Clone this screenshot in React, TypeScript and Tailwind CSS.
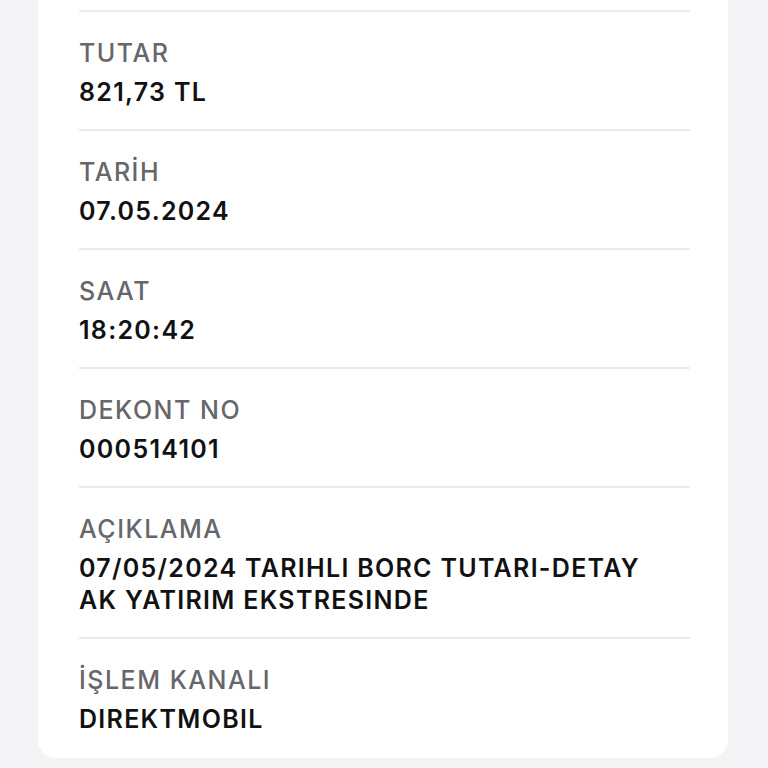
import React from 'react'

interface DetailRowProps {
  label: string
  value: React.ReactNode
}

const rows: DetailRowProps[] = [
  { label: 'TUTAR', value: '821,73 TL' },
  { label: 'TARİH', value: '07.05.2024' },
  { label: 'SAAT', value: '18:20:42' },
  { label: 'DEKONT NO', value: '000514101' },
  {
    label: 'AÇIKLAMA',
    value: (
      <>
        07/05/2024 TARIHLI BORC TUTARI-DETAY
        <br />
        AK YATIRIM EKSTRESINDE
      </>
    ),
  },
  { label: 'İŞLEM KANALI', value: 'DIREKTMOBIL' },
]

const DetailRow: React.FC<DetailRowProps> = ({ label, value }) => (
  <div className="border-t-2 border-[#ebebed] pt-[26px] pb-[21px]">
    <p className="text-[25px] leading-[30px] font-medium tracking-[1.5px] text-[#66666b]">{label}</p>
    <p className="mt-[8px] text-[25px] leading-[32px] font-semibold tracking-[1.3px] text-[#111113]">{value}</p>
  </div>
)

export default function App() {
  return (
    <div
      className="h-[768px] w-[768px] overflow-hidden bg-[#f4f4f6]"
      style={{ fontFamily: 'Inter, "Noto Sans", sans-serif' }}
    >
      <div className="ml-[38px] w-[690px] rounded-b-[18px] bg-white pb-[2px] pl-[41px] pr-[38px] pt-[10px]">
        {rows.map((row) => (
          <DetailRow key={row.label} {...row} />
        ))}
      </div>
    </div>
  )
}
